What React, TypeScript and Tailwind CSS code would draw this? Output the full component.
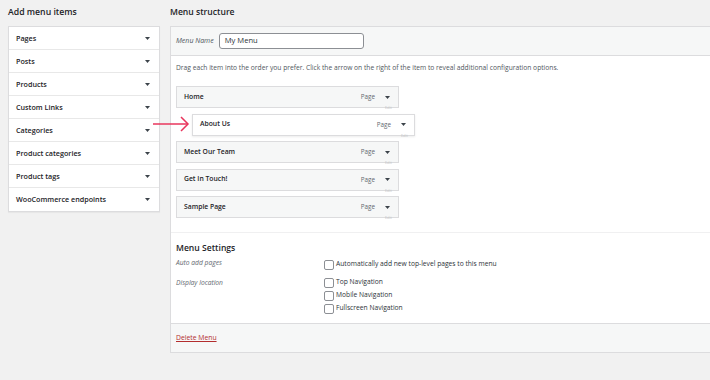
import React from "react"

const addItems = [
  "Pages",
  "Posts",
  "Products",
  "Custom Links",
  "Categories",
  "Product categories",
  "Product tags",
  "WooCommerce endpoints",
]

const menuItems = [
  { label: "Home", sub: false },
  { label: "About Us", sub: true },
  { label: "Meet Our Team", sub: false },
  { label: "Get In Touch!", sub: false },
  { label: "Sample Page", sub: false },
]

const Caret = () => (
  <svg width="5" height="3" viewBox="0 0 5 3" className="shrink-0">
    <path d="M0 0 L5 0 L2.5 3 Z" fill="#3c434a" />
  </svg>
)

const Check = ({ label }: { label: string }) => (
  <label className="flex items-center gap-[2px] h-[13px]">
    <span className="w-[10px] h-[10px] rounded-[2px] border border-[#8c8f94] bg-white" />
    <span>{label}</span>
  </label>
)

export default function App() {
  return (
    <div
      className="relative w-[710px] h-[380px] overflow-hidden bg-[#f1f1f1] text-[#2c3338] flex gap-[10px] pl-[8px]"
      style={{ fontFamily: '"Open Sans", "Noto Sans", sans-serif' }}
    >
      {/* left column */}
      <div className="w-[152px] shrink-0">
        <h2 className="h-[26px] pt-[6px] text-[8.7px] font-semibold text-[#1d2327]">
          Add menu items
        </h2>
        <div className="border border-[#dcdcde] bg-white shadow-[0_1px_1px_rgba(0,0,0,0.04)]">
          {addItems.map((t, i) => (
            <div
              key={t}
              className={`h-[23px] flex items-center justify-between pl-[7px] pr-[9px] text-[7.2px] font-semibold text-[#1d2327] ${
                i < addItems.length - 1 ? "border-b border-[#e8e8e8]" : ""
              }`}
            >
              <span>{t}</span>
              <Caret />
            </div>
          ))}
        </div>
      </div>

      {/* right column */}
      <div className="w-[545px] shrink-0">
        <h2 className="h-[26px] pt-[6px] text-[8.6px] font-semibold text-[#1d2327]">
          Menu structure
        </h2>
        <div className="border border-[#dcdcde] bg-white h-[327px] flex flex-col">
          <div className="h-[29px] bg-[#f6f7f7] border-b border-[#dcdcde] flex items-center pl-[5px] gap-[5px]">
            <span className="italic text-[7px] text-[#50575e]">Menu Name</span>
            <div className="w-[145px] h-[16px] border border-[#8c8f94] rounded-[3px] bg-white flex items-center pl-[5px] text-[7.6px] text-[#2c3338]">
              My Menu
            </div>
          </div>

          <div className="flex-1 flex flex-col">
            <div className="px-[5px] pb-[14px] border-b border-[#f0f0f1]">
              <p className="text-[6.7px] text-[#50575e] pt-[7px] h-[30px]">
                Drag each item into the order you prefer. Click the arrow on the right of the item to reveal additional
                configuration options.
              </p>
              <div className="flex flex-col gap-[5.5px]">
                {menuItems.map((m) => (
                  <div
                    key={m.label}
                    className={`relative w-[223px] h-[22px] bg-[#f6f7f7] border border-[#dcdcde] flex items-center justify-between pl-[7px] pr-[8px] ${
                      m.sub ? "ml-[16px] bg-white shadow-[0_1px_2px_rgba(0,0,0,0.08)]" : ""
                    }`}
                  >
                    <span className="text-[6.8px] font-semibold text-[#1d2327]">{m.label}</span>
                    <span className="flex items-center gap-[10px]">
                      <span className="text-[6.3px] text-[#646970]">Page</span>
                      <Caret />
                    </span>
                    <span className="absolute right-[6px] bottom-[-3px] text-[4px] text-[#c3c4c7] leading-none">
                      Edit
                    </span>
                  </div>
                ))}
              </div>
            </div>

            <div className="px-[5px] pt-[8px]">
              <h3 className="text-[8.6px] font-semibold text-[#1d2327] h-[17px] pt-[1px]">Menu Settings</h3>
              <div className="flex text-[6.7px] h-[18px]">
                <span className="w-[148px] italic text-[#646970]">Auto add pages</span>
                <Check label="Automatically add new top-level pages to this menu" />
              </div>
              <div className="flex text-[6.7px]">
                <span className="w-[148px] italic text-[#646970] h-[13px] leading-[13px]">Display location</span>
                <div className="flex flex-col">
                  <Check label="Top Navigation" />
                  <Check label="Mobile Navigation" />
                  <Check label="Fullscreen Navigation" />
                </div>
              </div>
            </div>
          </div>

          <div className="h-[29px] bg-[#f6f7f7] border-t border-[#dcdcde] flex items-center pl-[5px]">
            <span className="text-[6.8px] text-[#b32d2e] underline">Delete Menu</span>
          </div>
        </div>
      </div>

      {/* annotation arrow */}
      <svg className="absolute left-[152px] top-[116px]" width="40" height="16" viewBox="0 0 40 16">
        <path d="M1 8 H36" stroke="#e8365d" strokeWidth="1.5" fill="none" />
        <path d="M29 1 L36 8 L29 15" stroke="#e8365d" strokeWidth="1.5" fill="none" />
      </svg>
    </div>
  )
}
